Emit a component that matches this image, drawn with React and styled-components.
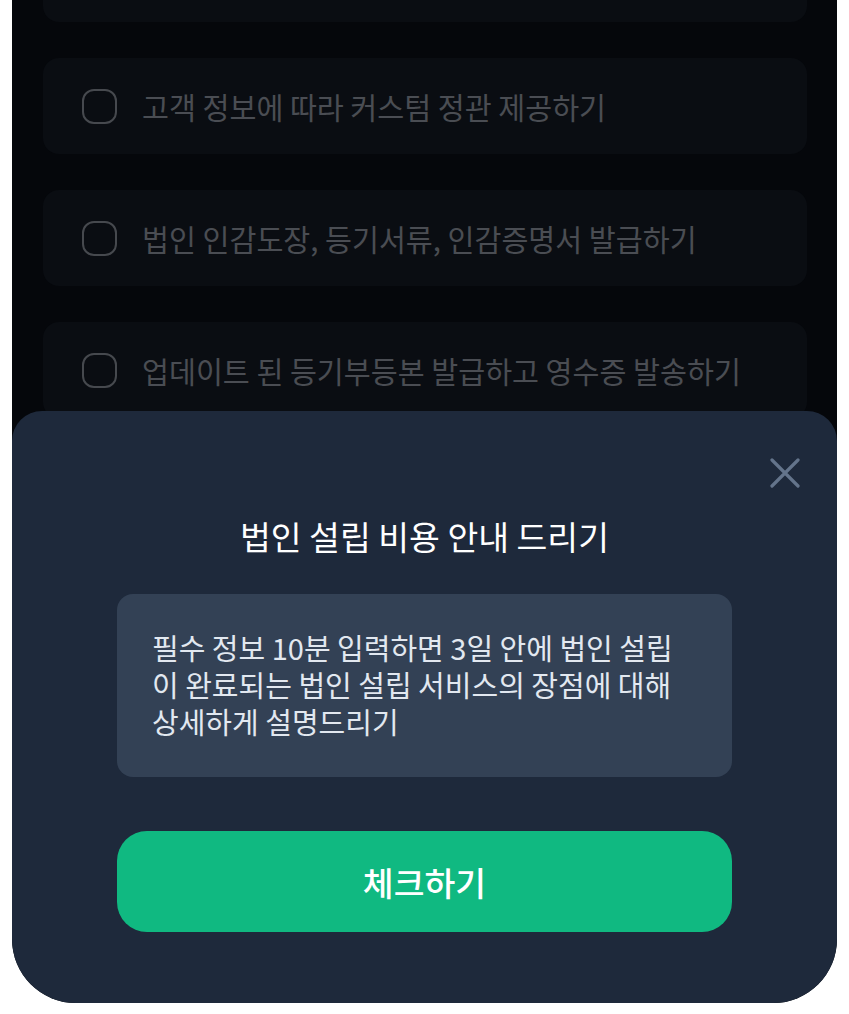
import styled, { createGlobalStyle } from "styled-components";

const GlobalStyle = createGlobalStyle`
  html, body {
    margin: 0;
    padding: 0;
    background: #ffffff;
  }
  body {
    font-family: "Noto Sans CJK KR", "Noto Sans", sans-serif;
  }
`;

const Phone = styled.div`
  position: relative;
  margin-left: 12px;
  width: 825px;
  height: 1003px;
  background: #05070b;
  border-radius: 0 0 64px 64px;
  overflow: hidden;
`;

const List = styled.ul`
  list-style: none;
  margin: -74px 0 0;
  padding: 0 30px 0 31px;
  display: flex;
  flex-direction: column;
  gap: 36px;
`;

const Item = styled.li`
  height: 96px;
  box-sizing: border-box;
  padding: 0 39px;
  display: flex;
  align-items: center;
  gap: 25px;
  background: #0a0d12;
  border-radius: 16px;
`;

const Check = styled.span`
  flex: none;
  width: 35px;
  height: 35px;
  box-sizing: border-box;
  border: 2px solid #46494e;
  border-radius: 12px;
`;

const ItemText = styled.span`
  font-size: 29.3px;
  color: #4a4d53;
  white-space: nowrap;
`;

const Sheet = styled.section`
  position: absolute;
  left: 0;
  right: 0;
  bottom: 0;
  height: 592px;
  box-sizing: border-box;
  padding: 104px 105px 71px;
  background: #1e293b;
  border-radius: 30px 30px 0 0;
  display: flex;
  flex-direction: column;
`;

const Close = styled.button`
  position: absolute;
  top: 47px;
  right: 37px;
  width: 30px;
  height: 30px;
  padding: 0;
  border: 0;
  background: none;
  cursor: pointer;
  display: flex;
`;

const Title = styled.h2`
  margin: 0;
  font-size: 33.5px;
  line-height: 42px;
  font-weight: 400;
  color: #ffffff;
  text-align: center;
`;

const Notice = styled.p`
  margin: 37px 0 0;
  padding: 35px 35px 37px;
  font-size: 29px;
  line-height: 37px;
  color: #e2e8f0;
  background: #334155;
  border-radius: 16px;
`;

const CheckButton = styled.button`
  margin-top: 54px;
  height: 102px;
  border: 0;
  border-radius: 30px;
  background: #10b981;
  color: #ffffff;
  font-family: inherit;
  font-size: 33.5px;
  font-weight: 500;
  cursor: pointer;
`;

const tasks = [
  "법인 설립 서류 검토하기",
  "고객 정보에 따라 커스텀 정관 제공하기",
  "법인 인감도장, 등기서류, 인감증명서 발급하기",
  "업데이트 된 등기부등본 발급하고 영수증 발송하기",
];

export default function App() {
  return (
    <>
      <GlobalStyle />
      <Phone>
        <List>
          {tasks.map((t) => (
            <Item key={t}>
              <Check />
              <ItemText>{t}</ItemText>
            </Item>
          ))}
        </List>
        <Sheet>
          <Close aria-label="닫기">
            <svg width="30" height="30" viewBox="0 0 30 30" fill="none">
              <path
                d="M2 2L28 28M28 2L2 28"
                stroke="#64748b"
                strokeWidth="3.2"
                strokeLinecap="round"
              />
            </svg>
          </Close>
          <Title>법인 설립 비용 안내 드리기</Title>
          <Notice>
            필수 정보 10분 입력하면 3일 안에 법인 설립이 완료되는 법인 설립
            서비스의 장점에 대해 상세하게 설명드리기
          </Notice>
          <CheckButton>체크하기</CheckButton>
        </Sheet>
      </Phone>
    </>
  );
}
